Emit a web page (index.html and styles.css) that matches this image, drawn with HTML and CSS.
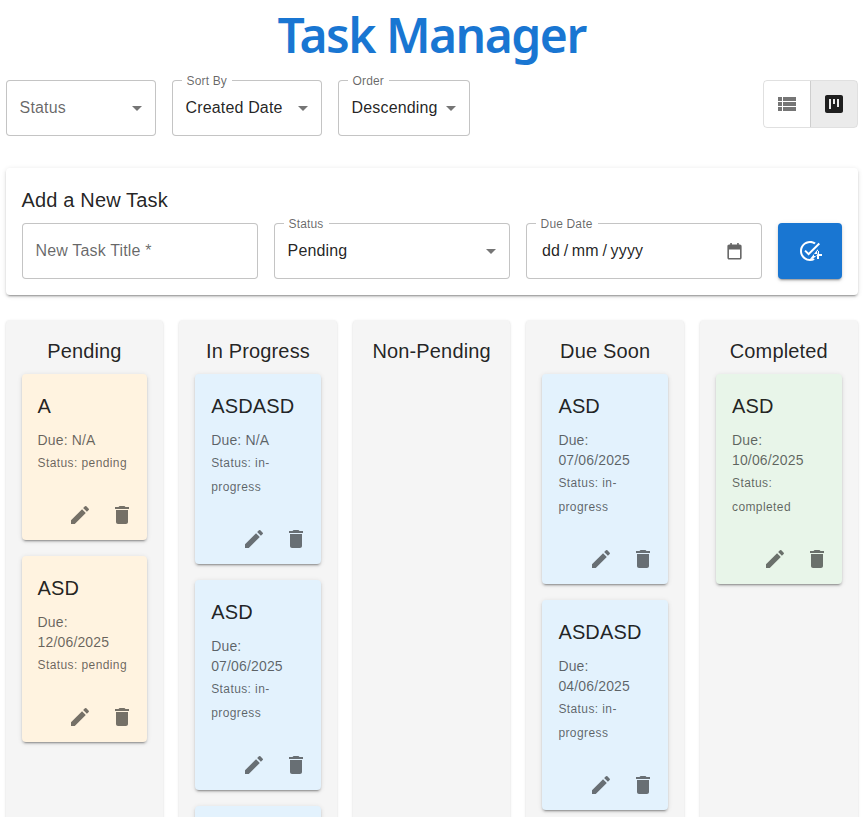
FILE: index.html
```html
<!DOCTYPE html>
<html>
<head>
  <title>Task Manager</title>
  <meta name="viewport" content="width=device-width, initial-scale=1.0">
  <link rel="stylesheet" href="styles.css">
</head>
<body>
  <div class="app">
    <h1 class="page-title">Task Manager</h1>

    <div class="toolbar">
      <div class="filters">
        <div class="select select-filter">
          <span class="placeholder">Status</span>
          <svg class="arrow" viewBox="0 0 24 24"><path d="M7 10l5 5 5-5z"/></svg>
        </div>
        <div class="select select-filter">
          <span class="float-label">Sort By</span>
          <span>Created Date</span>
          <svg class="arrow" viewBox="0 0 24 24"><path d="M7 10l5 5 5-5z"/></svg>
        </div>
        <div class="select">
          <span class="float-label">Order</span>
          <span>Descending</span>
          <svg class="arrow" viewBox="0 0 24 24"><path d="M7 10l5 5 5-5z"/></svg>
        </div>
      </div>
      <div class="view-toggle">
        <div class="toggle-btn">
          <svg viewBox="0 0 24 24"><path d="M3 14h4v-4H3v4zm0 5h4v-4H3v4zM3 9h4V5H3v4zm5 5h13v-4H8v4zm0 5h13v-4H8v4zM8 5v4h13V5H8z"/></svg>
        </div>
        <div class="toggle-btn selected">
          <svg viewBox="0 0 24 24"><path fill-rule="evenodd" d="M5 3h14c1.1 0 2 .9 2 2v14c0 1.1-.9 2-2 2H5c-1.100 0-2-.9-2-2V5c0-1.100.9-2 2-2zm2 4v10h2V7H7zm4 0v5h2V7h-2zm4 0v8h2V7h-2z"/></svg>
        </div>
      </div>
    </div>

    <div class="add-form">
      <h2 class="form-title">Add a New Task</h2>
      <div class="form-row">
        <div class="select field"><span class="placeholder">New Task Title *</span></div>
        <div class="select field">
          <span class="float-label">Status</span>
          <span>Pending</span>
          <svg class="arrow" viewBox="0 0 24 24"><path d="M7 10l5 5 5-5z"/></svg>
        </div>
        <div class="select field">
          <span class="float-label">Due Date</span>
          <span class="date-text">dd / mm / yyyy</span>
          <svg class="calendar" viewBox="0 0 16 16"><path fill-rule="evenodd" d="M4 0h1.500v1.500h5V0H12v1.500h1c1 0 1.700.7 1.700 1.700v10.600c0 1-.7 1.700-1.700 1.700H3c-1 0-1.700-.7-1.700-1.700V3.200c0-1 .7-1.700 1.700-1.700h1V0zM2.800 6v7.800c0 .2 0 .2.200.2h10c.2 0 .2 0 .2-.2V6H2.800z"/></svg>
        </div>
        <button class="add-btn">
          <svg viewBox="0 0 24 24"><path d="M22 5.180 10.590 16.600l-4.240-4.240 1.410-1.410 2.830 2.830 10-10L22 5.180zm-2.210 5.040c.13.570.21 1.170.21 1.780 0 4.420-3.580 8-8 8s-8-3.580-8-8 3.580-8 8-8c1.580 0 3.040.46 4.280 1.250l1.440-1.440C16.100 2.670 14.130 2 12 2 6.480 2 2 6.480 2 12s4.480 10 10 10c1.730 0 3.360-.44 4.780-1.220l-1.500-1.500c-1 .46-2.110.72-3.280.72zM19 15h-3v2h3v3h2v-3h3v-2h-3v-3h-2v3z"/></svg>
        </button>
      </div>
    </div>

    <div class="board">
      <div class="column">
        <h3 class="column-title">Pending</h3>
        <div class="card pending">
          <div class="card-body">
            <div class="card-title">A</div>
            <div class="card-due">Due: N/A</div>
            <div class="card-status">Status: pending</div>
          </div>
          <div class="card-actions">
            <span class="icon-btn"><svg viewBox="0 0 24 24"><path d="M3 17.250V21h3.750L17.810 9.940l-3.750-3.750L3 17.250zM20.710 7.040c.39-.39.39-1.020 0-1.410l-2.340-2.340a.996.996 0 0 0-1.410 0l-1.830 1.830 3.750 3.750 1.830-1.830z"/></svg></span>
            <span class="icon-btn"><svg viewBox="0 0 24 24"><path d="M6 19c0 1.100.9 2 2 2h8c1.100 0 2-.9 2-2V7H6v12zM19 4h-3.500l-1-1h-5l-1 1H5v2h14V4z"/></svg></span>
          </div>
        </div>
        <div class="card pending">
          <div class="card-body">
            <div class="card-title">ASD</div>
            <div class="card-due">Due: 12/06/2025</div>
            <div class="card-status">Status: pending</div>
          </div>
          <div class="card-actions">
            <span class="icon-btn"><svg viewBox="0 0 24 24"><path d="M3 17.250V21h3.750L17.810 9.940l-3.750-3.750L3 17.250zM20.710 7.040c.39-.39.39-1.020 0-1.410l-2.340-2.340a.996.996 0 0 0-1.410 0l-1.830 1.830 3.750 3.750 1.830-1.830z"/></svg></span>
            <span class="icon-btn"><svg viewBox="0 0 24 24"><path d="M6 19c0 1.100.9 2 2 2h8c1.100 0 2-.9 2-2V7H6v12zM19 4h-3.500l-1-1h-5l-1 1H5v2h14V4z"/></svg></span>
          </div>
        </div>
      </div>

      <div class="column">
        <h3 class="column-title">In Progress</h3>
        <div class="card progress">
          <div class="card-body">
            <div class="card-title">ASDASD</div>
            <div class="card-due">Due: N/A</div>
            <div class="card-status">Status: in-progress</div>
          </div>
          <div class="card-actions">
            <span class="icon-btn"><svg viewBox="0 0 24 24"><path d="M3 17.250V21h3.750L17.810 9.940l-3.750-3.750L3 17.250zM20.710 7.040c.39-.39.39-1.020 0-1.410l-2.340-2.340a.996.996 0 0 0-1.410 0l-1.830 1.830 3.750 3.750 1.830-1.830z"/></svg></span>
            <span class="icon-btn"><svg viewBox="0 0 24 24"><path d="M6 19c0 1.100.9 2 2 2h8c1.100 0 2-.9 2-2V7H6v12zM19 4h-3.500l-1-1h-5l-1 1H5v2h14V4z"/></svg></span>
          </div>
        </div>
        <div class="card progress">
          <div class="card-body">
            <div class="card-title">ASD</div>
            <div class="card-due">Due: 07/06/2025</div>
            <div class="card-status">Status: in-progress</div>
          </div>
          <div class="card-actions">
            <span class="icon-btn"><svg viewBox="0 0 24 24"><path d="M3 17.250V21h3.750L17.810 9.940l-3.750-3.750L3 17.250zM20.710 7.040c.39-.39.39-1.020 0-1.410l-2.340-2.340a.996.996 0 0 0-1.410 0l-1.830 1.830 3.750 3.750 1.830-1.830z"/></svg></span>
            <span class="icon-btn"><svg viewBox="0 0 24 24"><path d="M6 19c0 1.100.9 2 2 2h8c1.100 0 2-.9 2-2V7H6v12zM19 4h-3.500l-1-1h-5l-1 1H5v2h14V4z"/></svg></span>
          </div>
        </div>
        <div class="card progress">
          <div class="card-body"></div>
        </div>
      </div>

      <div class="column">
        <h3 class="column-title">Non-Pending</h3>
      </div>

      <div class="column">
        <h3 class="column-title">Due Soon</h3>
        <div class="card progress">
          <div class="card-body">
            <div class="card-title">ASD</div>
            <div class="card-due">Due: 07/06/2025</div>
            <div class="card-status">Status: in-progress</div>
          </div>
          <div class="card-actions">
            <span class="icon-btn"><svg viewBox="0 0 24 24"><path d="M3 17.250V21h3.750L17.810 9.940l-3.750-3.750L3 17.250zM20.710 7.040c.39-.39.39-1.020 0-1.410l-2.340-2.340a.996.996 0 0 0-1.410 0l-1.830 1.830 3.750 3.750 1.830-1.830z"/></svg></span>
            <span class="icon-btn"><svg viewBox="0 0 24 24"><path d="M6 19c0 1.100.9 2 2 2h8c1.100 0 2-.9 2-2V7H6v12zM19 4h-3.500l-1-1h-5l-1 1H5v2h14V4z"/></svg></span>
          </div>
        </div>
        <div class="card progress">
          <div class="card-body">
            <div class="card-title">ASDASD</div>
            <div class="card-due">Due: 04/06/2025</div>
            <div class="card-status">Status: in-progress</div>
          </div>
          <div class="card-actions">
            <span class="icon-btn"><svg viewBox="0 0 24 24"><path d="M3 17.250V21h3.750L17.810 9.940l-3.750-3.750L3 17.250zM20.710 7.040c.39-.39.39-1.020 0-1.410l-2.340-2.340a.996.996 0 0 0-1.410 0l-1.830 1.830 3.750 3.750 1.830-1.830z"/></svg></span>
            <span class="icon-btn"><svg viewBox="0 0 24 24"><path d="M6 19c0 1.100.9 2 2 2h8c1.100 0 2-.9 2-2V7H6v12zM19 4h-3.500l-1-1h-5l-1 1H5v2h14V4z"/></svg></span>
          </div>
        </div>
      </div>

      <div class="column">
        <h3 class="column-title">Completed</h3>
        <div class="card completed">
          <div class="card-body">
            <div class="card-title">ASD</div>
            <div class="card-due">Due: 10/06/2025</div>
            <div class="card-status">Status: completed</div>
          </div>
          <div class="card-actions">
            <span class="icon-btn"><svg viewBox="0 0 24 24"><path d="M3 17.250V21h3.750L17.810 9.940l-3.750-3.750L3 17.250zM20.710 7.040c.39-.39.39-1.020 0-1.410l-2.340-2.340a.996.996 0 0 0-1.410 0l-1.830 1.830 3.750 3.750 1.830-1.830z"/></svg></span>
            <span class="icon-btn"><svg viewBox="0 0 24 24"><path d="M6 19c0 1.100.9 2 2 2h8c1.100 0 2-.9 2-2V7H6v12zM19 4h-3.500l-1-1h-5l-1 1H5v2h14V4z"/></svg></span>
          </div>
        </div>
      </div>
    </div>
  </div>
</body>
</html>
```

FILE: styles.css
```css
html,
body {
  height: 100%;
  overflow: hidden;
}

body {
  margin: 0;
  background: #fff;
  color: rgba(0, 0, 0, 0.87);
  font-family: "Liberation Sans", Arial, sans-serif;
  font-size: 16px;
  letter-spacing: 0.00938em;
}

.app {
  padding: 0 7.4px 0 5.6px;
}

.page-title {
  margin: 0;
  height: 80px;
  line-height: 70px;
  text-align: center;
  color: #1976d2;
  font-family: "Noto Sans", "Open Sans", sans-serif;
  font-size: 48px;
  font-weight: 600;
  letter-spacing: -1.5px;
}

.toolbar {
  display: flex;
  justify-content: space-between;
  align-items: flex-start;
  margin-bottom: 32px;
}

.filters {
  display: flex;
  gap: 16px;
}

.select {
  position: relative;
  display: flex;
  align-items: center;
  justify-content: space-between;
  gap: 1px;
  box-sizing: border-box;
  height: 56px;
  padding: 0 6px 0 13px;
  background: #fff;
  border: 1px solid rgba(0, 0, 0, 0.23);
  border-radius: 4px;
}

.select-filter {
  width: 150px;
}

.placeholder {
  color: rgba(0, 0, 0, 0.6);
}

.float-label {
  position: absolute;
  top: -8px;
  left: 9px;
  padding: 0 5px;
  background: #fff;
  color: rgba(0, 0, 0, 0.6);
  font-size: 12px;
  line-height: 16px;
}

.arrow {
  width: 24px;
  height: 24px;
  flex-shrink: 0;
  fill: rgba(0, 0, 0, 0.54);
}

.view-toggle {
  display: flex;
  height: 48px;
  border: 1px solid rgba(0, 0, 0, 0.12);
  border-radius: 4px;
  box-sizing: border-box;
  overflow: hidden;
}

.toggle-btn {
  display: flex;
  align-items: center;
  justify-content: center;
  width: 46px;
}

.toggle-btn svg {
  width: 24px;
  height: 24px;
  fill: rgba(0, 0, 0, 0.54);
}

.toggle-btn.selected {
  border-left: 1px solid rgba(0, 0, 0, 0.12);
  background: rgba(0, 0, 0, 0.08);
}

.toggle-btn.selected svg {
  fill: rgba(0, 0, 0, 0.87);
}

.add-form {
  padding: 16px;
  margin-bottom: 25px;
  background: #fff;
  border-radius: 4px;
  box-shadow: 0 3px 1px -2px rgba(0, 0, 0, 0.2), 0 2px 2px 0 rgba(0, 0, 0, 0.14), 0 1px 5px 0 rgba(0, 0, 0, 0.12);
}

.form-title {
  margin: 0 0 7px;
  font-size: 20px;
  font-weight: 400;
  line-height: 32px;
  letter-spacing: 0.0075em;
}

.form-row {
  display: flex;
  gap: 16px;
}

.field {
  flex: 1;
  min-width: 0;
}

.date-text {
  padding-left: 2.4px;
  word-spacing: -1px;
}

.calendar {
  width: 17px;
  height: 17px;
  margin-right: 12px;
  fill: rgba(0, 0, 0, 0.6);
}

.add-btn {
  display: flex;
  align-items: center;
  justify-content: center;
  width: 64px;
  height: 56px;
  padding: 0;
  background: #1976d2;
  border: none;
  border-radius: 4px;
  box-shadow: 0 3px 1px -2px rgba(0, 0, 0, 0.2), 0 2px 2px 0 rgba(0, 0, 0, 0.14), 0 1px 5px 0 rgba(0, 0, 0, 0.12);
}

.add-btn svg {
  width: 24px;
  height: 24px;
  fill: #fff;
}

.board {
  display: grid;
  grid-template-columns: repeat(5, minmax(0, 1fr));
  gap: 16px;
  align-items: stretch;
}

.column {
  min-height: 520px;
  padding: 15px 16px 16px;
  background: #f5f5f5;
  border-radius: 4px;
  box-shadow: 0 2px 1px -1px rgba(0, 0, 0, 0.2), 0 1px 1px 0 rgba(0, 0, 0, 0.14), 0 1px 3px 0 rgba(0, 0, 0, 0.12);
}

.column-title {
  margin: 0 0 7px;
  text-align: center;
  font-size: 20px;
  font-weight: 400;
  line-height: 32px;
  letter-spacing: 0.0075em;
}

.card {
  margin-bottom: 16px;
  border-radius: 4px;
  box-shadow: 0 3px 1px -2px rgba(0, 0, 0, 0.2), 0 2px 2px 0 rgba(0, 0, 0, 0.14), 0 1px 5px 0 rgba(0, 0, 0, 0.12);
}

.card.pending {
  background: #fff3e0;
}

.card.progress {
  background: #e3f2fd;
}

.card.completed {
  background: #e8f5e9;
}

.card-body {
  padding: 16px 16px 15px;
}

.card-title {
  margin-bottom: 8px;
  font-size: 20px;
  line-height: 32px;
  letter-spacing: 0.0075em;
}

.card-due {
  color: rgba(0, 0, 0, 0.6);
  font-size: 14px;
  line-height: 20px;
  letter-spacing: 0.01071em;
}

.card-status {
  margin-top: 1px;
  color: rgba(0, 0, 0, 0.6);
  font-size: 12px;
  line-height: 24px;
  letter-spacing: 0.03333em;
}

.card-actions {
  display: flex;
  justify-content: flex-end;
  gap: 8px;
  padding: 8px;
}

.icon-btn {
  display: flex;
  padding: 5px;
}

.icon-btn svg {
  width: 24px;
  height: 24px;
  fill: rgba(0, 0, 0, 0.54);
}
```
